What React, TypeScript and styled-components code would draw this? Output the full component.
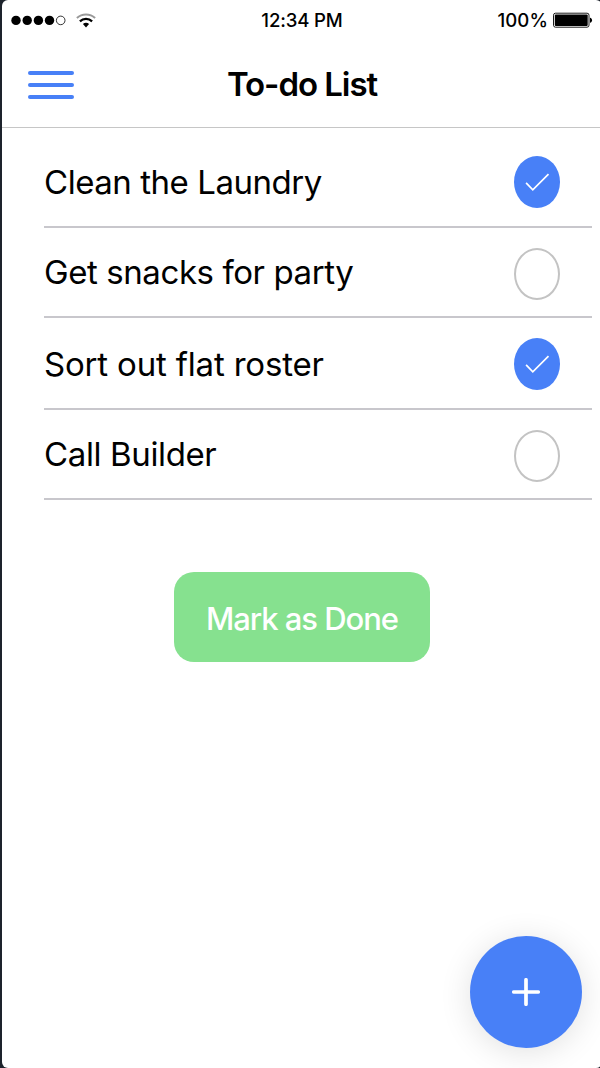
import React from "react";
import styled, { createGlobalStyle } from "styled-components";

const BLUE = "#4880f7";
const SEPARATOR = "#c8c7cc";

const GlobalStyle = createGlobalStyle`
  *, *::before, *::after { box-sizing: border-box; }
  html, body { margin: 0; height: 100%; overflow: hidden; background: #1d232c; }
  body { font-family: Inter, "Liberation Sans", sans-serif; color: #000; }
  button { font-family: inherit; border: 0; padding: 0; margin: 0; background: none; }
`;

const Screen = styled.main`
  position: relative;
  display: flex;
  flex-direction: column;
  width: 600px;
  height: 1068px;
  margin-left: 2px;
  border-radius: 6px;
  background: #fff;
  overflow: hidden;
`;

const StatusBar = styled.div`
  display: grid;
  grid-template-columns: 1fr auto 1fr;
  align-items: center;
  height: 40px;
  padding: 0 9px;
  font-size: 18.6px;
  font-weight: 500;
  line-height: 24px;
`;

const Signal = styled.div`
  display: flex;
  align-items: center;
  gap: 10px;
`;

const Power = styled.div`
  display: flex;
  align-items: center;
  justify-content: flex-end;
  gap: 5px;
`;

const StatusText = styled.span<{ $tracking: number }>`
  letter-spacing: ${(p) => p.$tracking}px;
  white-space: nowrap;
`;

const NavBar = styled.header`
  display: grid;
  grid-template-columns: 1fr auto 1fr;
  align-items: center;
  height: 88px;
  padding: 2px 26px 0;
  border-bottom: 1px solid #c6c6c6;
`;

const MenuButton = styled.button`
  display: flex;
  flex-direction: column;
  gap: 8px;
  width: 46px;
  padding-top: 1px;
`;

const MenuLine = styled.span`
  height: 4px;
  border-radius: 2px;
  background: ${BLUE};
`;

const Title = styled.h1`
  margin: 0;
  padding-bottom: 2px;
  font-size: 33px;
  line-height: 42px;
  font-weight: 600;
  letter-spacing: -1.05px;
  white-space: nowrap;
`;

const List = styled.ul`
  list-style: none;
  margin: 0;
  padding: 8px 10px 0 42px;
`;

const Row = styled.li<{ $height: number }>`
  display: flex;
  align-items: flex-end;
  justify-content: space-between;
  height: ${(p) => p.$height}px;
  padding-right: 32px;
  border-bottom: 2px solid ${SEPARATOR};
`;

const Label = styled.span<{ $tracking: number }>`
  margin-bottom: 24px;
  font-size: 33px;
  line-height: 40px;
  letter-spacing: ${(p) => p.$tracking}px;
  white-space: nowrap;
`;

const Check = styled.span<{ $done: boolean }>`
  display: flex;
  align-items: center;
  justify-content: center;
  width: 46px;
  height: 52px;
  margin-bottom: ${(p) => (p.$done ? 18 : 16)}px;
  border-radius: 50%;
  border: ${(p) => (p.$done ? "0" : "2px solid #c3c3c3")};
  background: ${(p) => (p.$done ? BLUE : "#fff")};
`;

const DoneButton = styled.button`
  align-self: center;
  width: 256px;
  height: 90px;
  margin-top: 72px;
  padding-top: 3px;
  border-radius: 20px;
  background: #86e18f;
  color: #fff;
  font-size: 31px;
  font-weight: 450;
  line-height: 40px;
  letter-spacing: -1.05px;
  white-space: nowrap;
`;

const AddButton = styled.button`
  position: absolute;
  right: 20px;
  bottom: 20px;
  display: flex;
  align-items: center;
  justify-content: center;
  width: 112px;
  height: 112px;
  border-radius: 50%;
  background: ${BLUE};
  box-shadow: 0 4px 32px rgba(0, 0, 0, 0.12);
`;

const tasks = [
  { label: "Clean the Laundry", done: true, height: 92, tracking: -0.46 },
  { label: "Get snacks for party", done: false, height: 90, tracking: -0.42 },
  { label: "Sort out flat roster", done: true, height: 92, tracking: -0.18 },
  { label: "Call Builder", done: false, height: 90, tracking: -0.37 },
];

const SignalDots = () => (
  <svg width="55" height="12" viewBox="0 0 55 12">
    {[5, 16.2, 27.4, 38.5].map((x) => (
      <circle key={x} cx={x} cy="6.4" r="4.7" />
    ))}
    <circle cx="49.7" cy="6.4" r="4.3" fill="none" stroke="#000" strokeWidth="0.8" />
  </svg>
);

const Wifi = () => (
  <svg width="20" height="15" viewBox="0 0 20 15" fill="none">
    <path d="M0.9 5 C6 0.2 14 0.2 19.1 5" stroke="#999" strokeWidth="2" />
    <path d="M3.9 8.3 C7.4 5.1 12.6 5.1 16.1 8.3" stroke="#000" strokeWidth="2.3" />
    <path d="M6.9 11 C8.7 9.4 11.3 9.4 13.1 11 L10 14.4 Z" fill="#000" />
  </svg>
);

const Battery = () => (
  <svg width="40" height="16" viewBox="0 0 40 16">
    <rect x="0.5" y="1.2" width="35.5" height="14" rx="2" fill="none" stroke="#000" strokeWidth="0.9" />
    <rect x="1.8" y="2.5" width="32.9" height="11.4" rx="1" />
    <path d="M37 5.7 C39.8 6.2 39.8 10.2 37 10.7 Z" />
  </svg>
);

const Tick = () => (
  <svg width="46" height="52" viewBox="0 0 46 52" fill="none">
    <path d="M12.1 26.8 L18.8 33.8 L34.5 18.2" stroke="#fff" strokeWidth="1.7" />
  </svg>
);

const Plus = () => (
  <svg width="28" height="28" viewBox="0 0 28 28" fill="none">
    <path d="M14 1.8 V26.2 M1.8 14 H26.2" stroke="#fff" strokeWidth="3.7" strokeLinecap="round" />
  </svg>
);

export default function App() {
  return (
    <>
      <GlobalStyle />
      <Screen>
        <StatusBar>
          <Signal>
            <SignalDots />
            <Wifi />
          </Signal>
          <StatusText $tracking={-0.15}>12:34 PM</StatusText>
          <Power>
            <StatusText $tracking={0.1}>100%</StatusText>
            <Battery />
          </Power>
        </StatusBar>
        <NavBar>
          <MenuButton aria-label="Menu">
            <MenuLine />
            <MenuLine />
            <MenuLine />
          </MenuButton>
          <Title>To-do List</Title>
        </NavBar>
        <List>
          {tasks.map((task) => (
            <Row key={task.label} $height={task.height}>
              <Label $tracking={task.tracking}>{task.label}</Label>
              <Check $done={task.done}>{task.done && <Tick />}</Check>
            </Row>
          ))}
        </List>
        <DoneButton>Mark as Done</DoneButton>
        <AddButton aria-label="Add task">
          <Plus />
        </AddButton>
      </Screen>
    </>
  );
}
